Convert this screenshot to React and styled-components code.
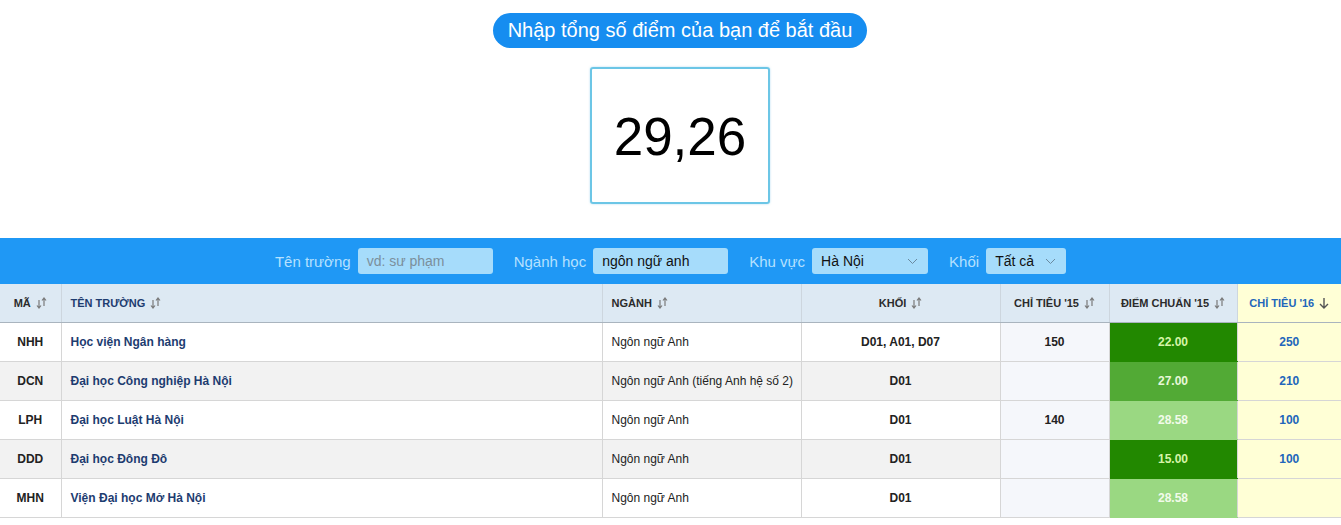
import React from "react";
import styled, { createGlobalStyle } from "styled-components";

const GlobalStyle = createGlobalStyle`
  body {
    margin: 0;
    background: #fff;
    font-family: "Liberation Sans", Arial, sans-serif;
  }
`;

const Page = styled.div`
  display: flex;
  flex-direction: column;
  align-items: center;
`;

const Hero = styled.div`
  display: flex;
  flex-direction: column;
  align-items: center;
  padding-left: 19px;
`;

const Pill = styled.div`
  margin-top: 13px;
  height: 35px;
  padding: 0 15px;
  border-radius: 18px;
  background: #168df0;
  color: #fff;
  font-size: 20px;
  display: flex;
  align-items: center;
`;

const ScoreBox = styled.div`
  margin-top: 19px;
  width: 176px;
  height: 131px;
  border: 2px solid #6cc6e6;
  border-radius: 3px;
  box-shadow: 0 0 2px rgba(80, 180, 230, 0.5);
  display: flex;
  align-items: center;
  justify-content: center;
  padding-top: 2px;
  box-sizing: content-box;
  font-size: 53px;
  color: #000;
`;

const FilterBar = styled.div`
  margin-top: 34px;
  width: 100%;
  height: 46px;
  background: #1f98f5;
  display: flex;
  align-items: center;
  justify-content: center;
  gap: 21px;
`;

const Field = styled.div`
  display: flex;
  align-items: center;
  gap: 7px;
`;

const Label = styled.span`
  color: #b5e1ff;
  font-size: 15px;
`;

const TextInput = styled.div`
  width: 126px;
  height: 26px;
  padding-left: 9px;
  border-radius: 3px;
  background: #a6dcfb;
  display: flex;
  align-items: center;
  font-size: 14px;
  color: ${(p) => (p.$placeholder ? "#7b8f9c" : "#111")};
`;

const Select = styled.div`
  width: ${(p) => p.$w}px;
  height: 26px;
  padding: 0 10px 0 9px;
  box-sizing: border-box;
  border-radius: 3px;
  background: #a6dcfb;
  display: flex;
  align-items: center;
  justify-content: space-between;
  font-size: 14px;
  color: #111;
`;

const Table = styled.table`
  width: 100%;
  border-collapse: collapse;
  table-layout: fixed;
  font-size: 12px;
`;

const Th = styled.th`
  height: 38px;
  padding: 0 9px;
  background: ${(p) => (p.$hl ? "#ffffd6" : "#dde9f3")};
  color: ${(p) => (p.$hl ? "#2266bb" : p.$blue ? "#1d3c70" : "#2b2b2b")};
  font-size: 11px;
  font-weight: bold;
  text-align: ${(p) => (p.$left ? "left" : "center")};
  border-right: 1px solid #cdd6de;
  border-bottom: 1px solid #a9b4be;
  white-space: nowrap;
  &:last-child {
    border-right: none;
  }
`;

const Tr = styled.tr`
  background: ${(p) => (p.$alt ? "#f2f2f2" : "#fff")};
`;

const Td = styled.td`
  height: 38px;
  padding: 0 9px;
  border-right: 1px solid #d6d6d6;
  border-bottom: 1px solid #d6d6d6;
  text-align: ${(p) => (p.$left ? "left" : "center")};
  color: #222;
  font-weight: ${(p) => (p.$bold ? "bold" : "normal")};
  white-space: nowrap;
  &:last-child {
    border-right: none;
  }
`;

const SchoolName = styled(Td)`
  color: #1d3c70;
  font-weight: bold;
`;

const Quota15 = styled(Td)`
  background: #f5f7fb;
  font-weight: bold;
`;

const ScoreCell = styled(Td)`
  background: ${(p) => p.$bg};
  color: ${(p) => p.$fg};
  font-weight: bold;
  border-bottom-color: ${(p) => p.$bg};
`;

const Quota16 = styled(Td)`
  background: #ffffd6;
  color: #2266bb;
  font-weight: bold;
`;

const SortIcon = () => (
  <svg width="11" height="12" viewBox="0 0 11 12" style={{ marginLeft: 5, verticalAlign: -2 }}>
    <g fill="none" stroke="#7a7a7a" strokeWidth="1.2">
      <path d="M3 3v8M1 8.5l2 2.5 2-2.5" />
      <path d="M8 9V1M6 3.5L8 1l2 2.5" />
    </g>
  </svg>
);

const DownIcon = () => (
  <svg width="10" height="12" viewBox="0 0 10 12" style={{ marginLeft: 5, verticalAlign: -2 }}>
    <g fill="none" stroke="#555" strokeWidth="1.4">
      <path d="M5 1v10M1 7l4 4 4-4" />
    </g>
  </svg>
);

const Chevron = () => (
  <svg width="11" height="7" viewBox="0 0 11 7">
    <path d="M1 1l4.5 4.5L10 1" fill="none" stroke="#6a8aa0" strokeWidth="1" />
  </svg>
);

const scoreColors = {
  dark: { bg: "#228800", fg: "#d6f5a8" },
  mid: { bg: "#52aa35", fg: "#e8f8d8" },
  light: { bg: "#9ad882", fg: "#f2fbea" },
};

const rows = [
  { ma: "NHH", ten: "Học viện Ngân hàng", nganh: "Ngôn ngữ Anh", khoi: "D01, A01, D07", ct15: "150", diem: "22.00", tone: "dark", ct16: "250" },
  { ma: "DCN", ten: "Đại học Công nghiệp Hà Nội", nganh: "Ngôn ngữ Anh (tiếng Anh hệ số 2)", khoi: "D01", ct15: "", diem: "27.00", tone: "mid", ct16: "210" },
  { ma: "LPH", ten: "Đại học Luật Hà Nội", nganh: "Ngôn ngữ Anh", khoi: "D01", ct15: "140", diem: "28.58", tone: "light", ct16: "100" },
  { ma: "DDD", ten: "Đại học Đông Đô", nganh: "Ngôn ngữ Anh", khoi: "D01", ct15: "", diem: "15.00", tone: "dark", ct16: "100" },
  { ma: "MHN", ten: "Viện Đại học Mở Hà Nội", nganh: "Ngôn ngữ Anh", khoi: "D01", ct15: "", diem: "28.58", tone: "light", ct16: "" },
];

export default function App() {
  return (
    <>
      <GlobalStyle />
      <Page>
        <Hero>
          <Pill>Nhập tổng số điểm của bạn để bắt đầu</Pill>
          <ScoreBox>29,26</ScoreBox>
        </Hero>
        <FilterBar>
          <Field>
            <Label>Tên trường</Label>
            <TextInput $placeholder>vd: sư phạm</TextInput>
          </Field>
          <Field>
            <Label>Ngành học</Label>
            <TextInput>ngôn ngữ anh</TextInput>
          </Field>
          <Field>
            <Label>Khu vực</Label>
            <Select $w={116}>
              Hà Nội <Chevron />
            </Select>
          </Field>
          <Field>
            <Label>Khối</Label>
            <Select $w={80}>
              Tất cả <Chevron />
            </Select>
          </Field>
        </FilterBar>
        <Table>
          <colgroup>
            <col style={{ width: 61 }} />
            <col style={{ width: 541 }} />
            <col style={{ width: 199 }} />
            <col style={{ width: 199 }} />
            <col style={{ width: 109 }} />
            <col style={{ width: 128 }} />
            <col />
          </colgroup>
          <thead>
            <tr>
              <Th>MÃ<SortIcon /></Th>
              <Th $left $blue>TÊN TRƯỜNG<SortIcon /></Th>
              <Th $left>NGÀNH<SortIcon /></Th>
              <Th>KHỐI<SortIcon /></Th>
              <Th>CHỈ TIÊU '15<SortIcon /></Th>
              <Th>ĐIỂM CHUẨN '15<SortIcon /></Th>
              <Th $hl>CHỈ TIÊU '16<DownIcon /></Th>
            </tr>
          </thead>
          <tbody>
            {rows.map((r, i) => (
              <Tr key={r.ma} $alt={i % 2 === 1}>
                <Td $bold>{r.ma}</Td>
                <SchoolName $left>{r.ten}</SchoolName>
                <Td $left>{r.nganh}</Td>
                <Td $bold>{r.khoi}</Td>
                <Quota15>{r.ct15}</Quota15>
                <ScoreCell $bg={scoreColors[r.tone].bg} $fg={scoreColors[r.tone].fg}>
                  {r.diem}
                </ScoreCell>
                <Quota16>{r.ct16}</Quota16>
              </Tr>
            ))}
          </tbody>
        </Table>
      </Page>
    </>
  );
}
